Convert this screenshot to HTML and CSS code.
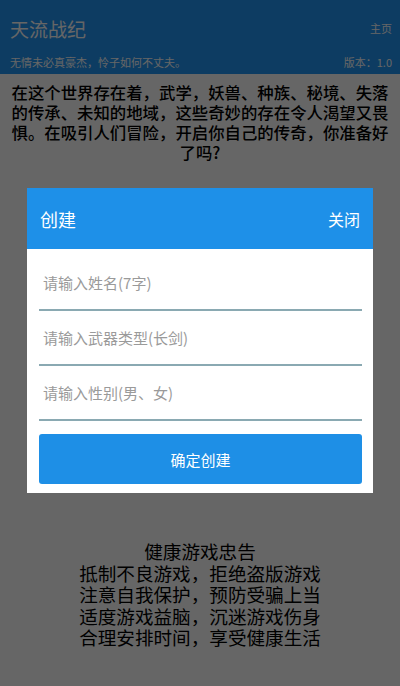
FILE: index.html
```html
<!DOCTYPE html>
<html lang="zh-CN">
<head>
    <meta charset="UTF-8">
    <meta name="viewport" content="width=device-width, initial-scale=1.0">
    <title>天流战纪</title>
    <link rel="stylesheet" href="styles.css">
</head>
<body>
    <div class="header">
        <div class="header-row">
            <span class="title">天流战纪</span>
            <a class="home-link" href="#">主页</a>
        </div>
        <div class="header-row sub">
            <span>无情未必真豪杰，怜子如何不丈夫。</span>
            <span>版本：1.0</span>
        </div>
    </div>

    <p class="intro">在这个世界存在着，武学，妖兽、种族、秘境、失落的传承、未知的地域，这些奇妙的存在令人渴望又畏惧。在吸引人们冒险，开启你自己的传奇，你准备好了吗?</p>

    <div class="advice">
        <p class="advice-title">健康游戏忠告</p>
        <p>抵制不良游戏，拒绝盗版游戏</p>
        <p>注意自我保护，预防受骗上当</p>
        <p>适度游戏益脑，沉迷游戏伤身</p>
        <p>合理安排时间，享受健康生活</p>
    </div>

    <div class="mask">
        <div class="dialog">
            <div class="dialog-head">
                <span class="dialog-title">创建</span>
                <span class="dialog-close">关闭</span>
            </div>
            <div class="dialog-body">
                <input type="text" placeholder="请输入姓名(7字)">
                <input type="text" placeholder="请输入武器类型(长剑)">
                <input type="text" placeholder="请输入性别(男、女)">
                <button>确定创建</button>
            </div>
        </div>
    </div>
</body>
</html>
```

FILE: styles.css
```css
body {
    margin: 0;
    background-color: #fff;
    font-family: "Noto Sans CJK SC", "Noto Sans", sans-serif;
    color: #000;
}
p {
    margin: 0;
}
.header {
    background-color: #2196f5;
    color: #fff;
    height: 74px;
    padding: 0 8px 0 10px;
    box-sizing: border-box;
}
.header-row {
    display: flex;
    justify-content: space-between;
    align-items: center;
}
.header-row:first-child {
    height: 50px;
    padding-top: 6px;
    box-sizing: border-box;
}
.title {
    font-size: 19px;
}
.home-link {
    color: #fff;
    text-decoration: none;
    font-size: 11px;
}
.sub {
    font-size: 11px;
    height: 24px;
}
.intro {
    margin: 8px 9px 0;
    font-size: 16.4px;
    line-height: 20px;
    text-align: center;
    font-weight: 500;
}
.advice {
    margin-top: 378px;
    text-align: center;
    font-size: 18.6px;
    line-height: 21.5px;
}
.mask {
    position: fixed;
    top: 0;
    left: 0;
    right: 0;
    bottom: 0;
    background-color: rgba(0,0,0,0.6);
    display: flex;
    justify-content: center;
    align-items: flex-start;
}
.dialog {
    margin-top: 188px;
    width: 346px;
    background-color: #fff;
}
.dialog-head {
    background-color: #1e90e8;
    height: 61px;
    padding: 0 13px;
    display: flex;
    justify-content: space-between;
    align-items: center;
    color: #fff;
}
.dialog-title {
    font-size: 18px;
}
.dialog-close {
    font-size: 16px;
}
.dialog-body {
    padding: 7px 11px 9px 12px;
    display: flex;
    flex-direction: column;
}
.dialog-body input {
    height: 55px;
    border: none;
    border-bottom: 2px solid #8aa9b2;
    padding: 0 4px;
    font-family: inherit;
    font-size: 15px;
    outline: none;
    box-sizing: border-box;
}
.dialog-body input::placeholder {
    color: #9a9a9a;
}
.dialog-body button {
    margin-top: 13px;
    height: 50px;
    background-color: #1e8fe6;
    color: #fff;
    border: none;
    border-radius: 3px;
    font-family: inherit;
    font-size: 15px;
}
```
